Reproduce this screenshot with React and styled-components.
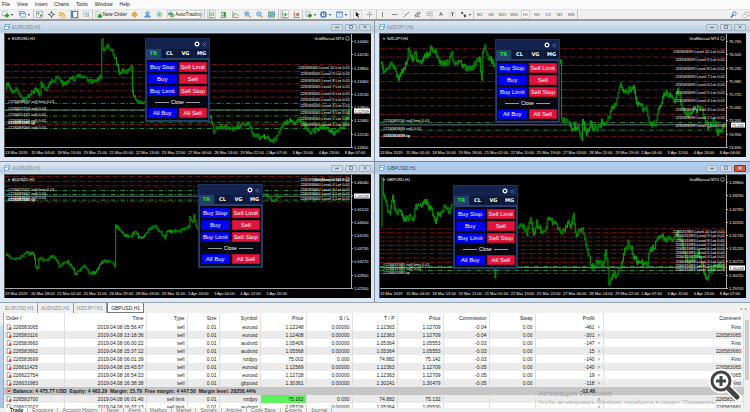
import React from 'react';
import styled, { createGlobalStyle, css } from 'styled-components';

const GlobalStyle = createGlobalStyle`
  * {
    box-sizing: border-box;
  }

  body {
    margin: 0;
    overflow: hidden;
    background: #f0f0f0;
    color: #222;
    font-family: 'Liberation Sans', Arial, sans-serif;
    font-size: 5px;
  }

  button {
    margin: 0;
    padding: 0;
    border: 0;
    background: none;
    color: inherit;
    font: inherit;
  }
`;

const Page = styled.main`
  display: flex;
  flex-direction: column;
`;

/* ---------- menu and toolbar ---------- */

const MenuBar = styled.nav`
  display: flex;
  gap: 7px;
  height: 9px;
  padding-left: 2px;
  background: #fbfbfb;
  line-height: 9px;
`;

const Toolbar = styled.div`
  display: flex;
  align-items: center;
  height: 12px;
  border-top: 1px solid #e4e4e4;
  border-bottom: 2px solid #9a9a9a;
`;

const Group = styled.div`
  display: flex;
  align-items: center;
  justify-content: space-around;
  flex: 0 0 ${({ $width }) => $width}px;
  height: 9px;
  border-right: 1px solid #c4c4c4;
`;

const Tool = styled.button`
  display: flex;
  align-items: center;
  justify-content: center;
  gap: 1px;
  min-width: 9px;
  height: 9px;
  line-height: 9px;
  white-space: nowrap;
  ${({ $period }) => $period && css`
    color: #555;
    font-size: 4px;
  `}
  ${({ $pressed }) => $pressed && css`
    background: #fafafa;
    outline: 1px solid #d2d2d2;
    outline-offset: -1px;
  `}
`;

const ToolbarEnd = styled.div`
  display: flex;
  gap: 3px;
  margin-left: auto;
`;

const Svg = styled.svg`
  display: block;
  flex: none;
  width: ${({ $size }) => $size || 8}px;
  height: ${({ $size }) => $size || 8}px;
`;

const icons = {
  newChart: (
    <>
      <rect x="1" y="2" width="11" height="9" fill="#fff" stroke="#7a8a9a" />
      <path d="M11 6v9M6 10.5h10" stroke="#16a016" strokeWidth="4" />
    </>
  ),
  profiles: (
    <>
      <rect x="1" y="1" width="11" height="8" fill="#bcd8f5" stroke="#5c8fc4" strokeWidth="1.5" />
      <rect x="4" y="6" width="11" height="8" fill="#e4f0fc" stroke="#5c8fc4" strokeWidth="1.5" />
    </>
  ),
  market: (
    <>
      <rect x="1" y="1" width="14" height="14" fill="#fff" stroke="#5b9bd8" strokeWidth="1.5" />
      <path d="M3 5l3-2 2 3-3 3z" fill="#20a030" />
      <path d="M8 9l4-2 2 3-3 4z" fill="#e0622a" />
    </>
  ),
  data: (
    <>
      <circle cx="8" cy="8" r="4" fill="#fff" stroke="#555" strokeWidth="2" />
      <path d="M8 0v5M8 11v5M0 8h5M11 8h5" stroke="#555" strokeWidth="2" />
    </>
  ),
  navigator: (
    <>
      <path d="M1 3h5l1 2h4v6H1z" fill="#f7d35a" stroke="#b98d17" />
      <path d="M6 8h4l1 1h4v6H6z" fill="#ffe28a" stroke="#b98d17" />
    </>
  ),
  terminal: (
    <>
      <rect x="1" y="1" width="14" height="14" fill="#fff" stroke="#3d7fc8" strokeWidth="2" />
      <path d="M3 1v14" stroke="#3d7fc8" strokeWidth="4" />
    </>
  ),
  tester: (
    <>
      <rect x="1" y="1" width="12" height="12" fill="#eef3f8" stroke="#9aa8b5" />
      <path d="M3 5h8M3 8h6" stroke="#6b93c0" />
      <circle cx="10" cy="9" r="3" fill="#d6e9fa" stroke="#777" />
      <path d="M12 11l4 4" stroke="#c99a2e" strokeWidth="2" />
    </>
  ),
  order: (
    <>
      <path d="M2 1h8l3 3v11H2z" fill="#fff" stroke="#888" />
      <path d="M4 5h6M4 8h4" stroke="#999" />
      <path d="M11 7v9M6 11.5h10" stroke="#16a016" strokeWidth="4" />
    </>
  ),
  editor: <path d="M8 1l7 7-7 7-7-7zM8 5l-3 4 6 1z" fill="#f0bc33" stroke="#a87912" />,
  account: (
    <>
      <circle cx="8" cy="5" r="4" fill="#7fb8f0" stroke="#3d7fc8" />
      <path d="M1 14c1-6 13-6 14 0z" fill="#5b9be0" stroke="#3d7fc8" />
    </>
  ),
  signal: (
    <>
      <circle cx="8" cy="8" r="6" fill="none" stroke="#9cb9cf" strokeWidth="2" />
      <circle cx="8" cy="8" r="3" fill="#4cae5e" />
    </>
  ),
  auto: (
    <>
      <path d="M1 7l7-5 7 5-7 3z" fill="#4c9ad8" stroke="#28689d" />
      <path d="M3 8h10l-2 5H5z" fill="#f0c13a" />
      <circle cx="12" cy="11" r="4" fill="#22aa36" />
      <path d="M11 9l3 2-3 2z" fill="#fff" />
    </>
  ),
  bars: <path d="M3 1v14h12M7 3v9M7 5H5M7 10h3M12 2v9M12 4h-2M12 9h3" stroke="#3c8b46" strokeWidth="1.5" fill="none" />,
  candles: (
    <>
      <path d="M1 15h14M5 1v13M11 2v12" stroke="#338a3d" strokeWidth="1.5" />
      <rect x="3" y="4" width="4" height="7" fill="#fff" stroke="#338a3d" />
      <rect x="9" y="4" width="4" height="8" fill="#22aa36" stroke="#338a3d" />
    </>
  ),
  line: <path d="M2 1v14h13M3 12l4-7 4 3 4 2" stroke="#3c8b46" strokeWidth="1.5" fill="none" />,
  zoomIn: (
    <>
      <circle cx="6.5" cy="6.5" r="5" fill="#d8edff" stroke="#4a90d2" strokeWidth="2" />
      <path d="M4 6.5h5M6.5 4v5" stroke="#2466a8" strokeWidth="1.5" />
      <path d="M10 10l5 5" stroke="#d0a02c" strokeWidth="3" />
    </>
  ),
  zoomOut: (
    <>
      <circle cx="6.5" cy="6.5" r="5" fill="#d8edff" stroke="#4a90d2" strokeWidth="2" />
      <path d="M4 6.5h5" stroke="#2466a8" strokeWidth="1.5" />
      <path d="M10 10l5 5" stroke="#d0a02c" strokeWidth="3" />
    </>
  ),
  tile: (
    <>
      <path d="M1 2h6v5H1zM9 9h6v5H9z" fill="#fff" stroke="#2f9f3e" strokeWidth="2" />
      <path d="M9 2h6v5H9zM1 9h6v5H1z" fill="#fff" stroke="#2d73c4" strokeWidth="2" />
    </>
  ),
  scroll: (
    <>
      <path d="M3 1v14h12M7 4v8" stroke="#555" strokeWidth="1.5" fill="none" />
      <path d="M9 4l6 4-6 4z" fill="#2faa3e" />
    </>
  ),
  shift: (
    <>
      <path d="M3 1v14h12M13 3v9" stroke="#555" strokeWidth="1.5" fill="none" />
      <path d="M11 4L5 8l6 4z" fill="#d2472d" />
    </>
  ),
  indicators: (
    <>
      <path d="M2 1h9v11H2z" fill="#fff" stroke="#888" />
      <path d="M4 9c2-8 3-5 5-5" stroke="#4a90d2" fill="none" />
      <path d="M11 6v9M6 10.5h10" stroke="#16a016" strokeWidth="4" />
    </>
  ),
  clock: (
    <>
      <circle cx="8" cy="8" r="6" fill="#fff" stroke="#2673c9" strokeWidth="3" />
      <path d="M8 4v5h3" stroke="#333" strokeWidth="1.5" fill="none" />
    </>
  ),
  template: (
    <>
      <rect x="1" y="2" width="14" height="12" fill="#fff" stroke="#5b9bd8" strokeWidth="2" />
      <path d="M1 4h14" stroke="#5b9bd8" strokeWidth="3" />
      <path d="M3 11l3-3 3 2 4-3" stroke="#d2472d" fill="none" />
    </>
  ),
  cursor: <path d="M4 1v12l3-3 2 5 3-1-3-5h4z" fill="#222" />,
  cross: <path d="M8 1v6M8 9v6M1 8h6M9 8h6" stroke="#777" strokeWidth="1.5" />,
  vline: <path d="M8 2v12" stroke="#777" strokeWidth="2" />,
  hline: <path d="M2 8h12" stroke="#777" strokeWidth="2" />,
  trend: <path d="M2 14L14 2" stroke="#777" strokeWidth="2" />,
  channel: <path d="M1 11L11 1M4 14L15 4M4 8v6M8 5v6M12 2v5M8 13h6" stroke="#555" strokeWidth="1.5" />,
  fibo: <path d="M1 2h14M1 6h14M1 10h14M10 14h5" stroke="#777" strokeWidth="1.5" strokeDasharray="2 1" />,
  label: (
    <>
      <rect x="2" y="2" width="12" height="12" fill="#fff" stroke="#888" strokeDasharray="2 1" />
      <path d="M5 5h6M8 5v7" stroke="#444" strokeWidth="2" />
    </>
  ),
  arrows: <path d="M1 5l4-4 3 5-3 1zM8 8l4 0 3 4-5 3z" fill="#444" />,
  search: (
    <>
      <circle cx="10" cy="6" r="4" fill="#fff" stroke="#2c6fc9" strokeWidth="2" />
      <path d="M7 9l-5 6" stroke="#2c6fc9" strokeWidth="3" />
    </>
  ),
  chat: (
    <>
      <ellipse cx="10" cy="6" rx="5.5" ry="4" fill="#eee" stroke="#999" />
      <ellipse cx="6" cy="10" rx="5" ry="3.5" fill="#fff" stroke="#999" />
    </>
  ),
  window: (
    <>
      <rect x="4" y="1" width="11" height="8" fill="#fff" stroke="#5b9bd8" strokeWidth="2" />
      <rect x="1" y="6" width="11" height="8" fill="#fff" stroke="#5b9bd8" strokeWidth="2" />
    </>
  ),
  gear: (
    <>
      <circle cx="8" cy="8" r="4.5" fill="none" stroke="#fff" strokeWidth="2.5" />
      <path d="M8 0v4M8 12v4M0 8h4M12 8h4M2.3 2.3l3 3M10.7 10.7l3 3M13.7 2.3l-3 3M5.3 10.7l-3 3" stroke="#fff" strokeWidth="2" />
    </>
  ),
  collapse: <path d="M8 2L2 8l6 6M14 2L8 8l6 6" fill="none" stroke="#a9b4d4" strokeWidth="1.5" />,
  smile: (
    <>
      <circle cx="8" cy="8" r="6.5" fill="none" stroke="#ccc" strokeWidth="1.5" />
      <path d="M5 5v2M11 5v2M4 9c2 4 6 4 8 0" fill="none" stroke="#ccc" strokeWidth="1.5" />
    </>
  ),
  sheet: (
    <>
      <path d="M3 1h6l4 4v10H3z" fill="#fff" stroke="#555" strokeWidth="1.5" />
      <circle cx="11" cy="12" r="3.5" fill="#e0452a" />
    </>
  ),
  balance: (
    <>
      <rect x="3" y="1" width="10" height="14" fill="#eee" stroke="#777" strokeWidth="1.5" />
      <circle cx="8" cy="8" r="3.5" fill="#d2372a" />
    </>
  ),
  caret: <path d="M3 5h10l-5 6z" fill="currentColor" />,
};

const Icon = ({ name, size }) => (
  <Svg $size={size} viewBox="0 0 16 16" aria-hidden="true">{icons[name]}</Svg>
);

const menu = ['File', 'View', 'Insert', 'Charts', 'Tools', 'Window', 'Help'];

const toolGroups = [
  { width: 34, tools: [{ icon: 'newChart', drop: true }, { icon: 'profiles', drop: true }] },
  {
    width: 59,
    tools: [
      { icon: 'market' },
      { icon: 'data' },
      { icon: 'navigator' },
      { icon: 'terminal', pressed: true },
      { icon: 'tester' },
    ],
  },
  {
    width: 112,
    tools: [
      { icon: 'order', text: 'New Order' },
      { icon: 'editor' },
      { icon: 'account' },
      { icon: 'signal' },
      { icon: 'auto', text: 'AutoTrading', pressed: true },
    ],
  },
  {
    width: 74,
    tools: [
      { icon: 'bars', pressed: true },
      { icon: 'candles' },
      { icon: 'line' },
      { icon: 'zoomIn' },
      { icon: 'zoomOut' },
      { icon: 'tile' },
    ],
  },
  { width: 24, tools: [{ icon: 'scroll', pressed: true }, { icon: 'shift' }] },
  {
    width: 48,
    tools: [
      { icon: 'indicators', drop: true },
      { icon: 'clock', drop: true },
      { icon: 'template', drop: true },
    ],
  },
  { width: 26, tools: [{ icon: 'cursor', pressed: true }, { icon: 'cross' }] },
  {
    width: 97,
    tools: [
      { icon: 'vline' },
      { icon: 'hline' },
      { icon: 'trend' },
      { icon: 'channel' },
      { icon: 'fibo' },
      { text: 'A' },
      { icon: 'label' },
      { icon: 'arrows', drop: true },
    ],
  },
  {
    width: 104,
    tools: ['M1', 'M5', 'M15', 'M30', 'H1', 'H4', 'D1', 'W1', 'MN'].map((text) => ({
      text,
      period: true,
      pressed: text === 'H1',
    })),
  },
];

/* ---------- chart windows ---------- */

const Desktop = styled.section`
  display: grid;
  grid-template-columns: 1fr 1fr;
  row-gap: 1px;
  background: #7d8790;
`;

const Window = styled.article`
  padding: 0 4px 4px;
  background: linear-gradient(#dce8f4, #b9cde0 10px, #dbe7f5 13px);
  ${({ $active }) => $active && css`
    background: linear-gradient(#b4cfec, #a9c6e4 10px, #cfe2f5 13px);
  `}
  ${({ $left }) => $left && css`
    padding-right: 3px;
    border-right: 1px solid #8a949e;
  `}
`;

const TitleBar = styled.header`
  display: flex;
  align-items: center;
  gap: 2px;
  height: 12px;
  color: ${({ $active }) => ($active ? '#38434f' : '#84888c')};
`;

const Caption = styled.h2`
  flex: 1;
  margin: 0;
  font-size: 5px;
  font-weight: 400;
`;

const Control = styled.button`
  display: flex;
  align-items: center;
  justify-content: center;
  width: 12px;
  height: 7px;
  border: 1px solid #a3b2c1;
  border-radius: 1px;
  background: #cddbe9;
  color: #7c8894;
  ${({ $close }) => $close && css`
    border-color: #8c2b1d;
    background: #d4573f;
    color: #fff;
  `}
`;

const Frame = styled.div`
  position: relative;
  display: grid;
  grid-template-columns: 1fr 19px;
  grid-template-rows: 114px 9px;
  border-top: 1px solid #555;
  border-left: 1px solid #555;
  background: #000;
  color: #f4f4f4;
  font-size: 4px;
  line-height: 5px;
  white-space: nowrap;
`;

const Plot = styled.div`
  position: relative;
  border-right: 1px solid #aaa;
  border-bottom: 1px solid #aaa;

  > svg {
    display: block;
    width: 100%;
    height: 113px;
  }
`;

const PriceAxis = styled.div`
  display: grid;
  grid-row: 1 / 3;
  grid-column: 2;
  grid-auto-rows: 1fr;
  align-items: center;
  padding: 1px 0 3px;
`;

const Tick = styled.span`
  display: flex;
  align-items: center;
  gap: 1px;

  &::before {
    width: 1px;
    height: 1px;
    background: #aaa;
    content: '';
  }
`;

const CurrentPrice = styled.output`
  position: absolute;
  right: 1px;
  padding: 0 1px;
  background: #fff;
  color: #111;
  transform: translateY(-50%);
`;

const TimeAxis = styled.div`
  display: grid;
  grid-template-columns: repeat(14, 1fr);
  grid-row: 2;
  grid-column: 1 / 3;
  padding-top: 2px;
`;

const ChartTitle = styled.div`
  position: absolute;
  top: 2px;
  left: 2px;
  display: flex;
  align-items: center;
  gap: 1px;
  color: #fff;
`;

const Advisor = styled.div`
  position: absolute;
  top: 2px;
  right: 1px;
  display: flex;
  gap: 1px;
`;

const PlotLabel = styled.span`
  position: absolute;
  transform: translateY(-50%);
  ${({ $side }) => ($side === 'left' ? 'left: 3px;' : 'right: 1px;')}
  ${({ $bold }) => $bold && css`
    color: #fff;
    font-weight: 700;
  `}
`;

/* ---------- trading panel ---------- */

const Panel = styled.aside`
  position: absolute;
  top: ${({ $top }) => $top}px;
  left: ${({ $left }) => $left}px;
  z-index: 1;
  width: 65px;
  border: 1px solid #1d3263;
  background: #142250;
  color: #fff;
`;

const PanelHead = styled.div`
  display: flex;
  align-items: center;
  justify-content: flex-end;
  gap: 2px;
  height: 10px;
  padding-right: 2px;
`;

const PanelTabs = styled.div`
  display: grid;
  grid-template-columns: repeat(4, 1fr);
  gap: 1px;
  height: 9px;
`;

const PanelTab = styled.button`
  background: ${({ $on }) => ($on ? '#24406f' : '#0e1838')};
  color: ${({ $on }) => ($on ? '#1ee61e' : '#fff')};
  font-family: 'DejaVu Sans', sans-serif;
  font-size: 5px;
  font-weight: 700;
  line-height: 9px;
`;

const PanelBody = styled.div`
  display: grid;
  grid-template-columns: 1fr 1fr;
  gap: 2px;
  padding: 2px 1px;
  border: 1px solid #24406f;
  border-top-width: 2px;
  background: #050810;
`;

const Trade = styled.button`
  height: 10px;
  border: 1px solid ${({ $sell }) => ($sell ? '#b30c2e' : '#0000c4')};
  background: ${({ $sell }) => ($sell ? '#e0143c' : '#0000fa')};
  font-size: 6px;
  line-height: 8px;
`;

const Divider = styled.div`
  display: flex;
  align-items: center;
  justify-content: center;
  gap: 2px;
  grid-column: 1 / 3;
  height: 8px;
  font-size: 5px;

  &::before,
  &::after {
    width: 14px;
    height: 1px;
    background: #999;
    content: '';
  }
`;

const trades = ['Buy Stop', 'Sell Limit', 'Buy', 'Sell', 'Buy Limit', 'Sell Stop', 'Close', 'All Buy', 'All Sell'];

const TradePanel = ({ top, left }) => (
  <Panel $top={top} $left={left}>
    <PanelHead>
      <Icon name="gear" size={6} />
      <Icon name="collapse" size={5} />
    </PanelHead>
    <PanelTabs>
      {['TR', 'CL', 'VG', 'MG'].map((name, i) => (
        <PanelTab key={name} $on={i === 0}>{name}</PanelTab>
      ))}
    </PanelTabs>
    <PanelBody>
      {trades.map((name) => (name === 'Close'
        ? <Divider key={name}>{name}</Divider>
        : <Trade key={name} $sell={name.includes('Sell')}>{name}</Trade>
      ))}
    </PanelBody>
  </Panel>
);

const lineStyles = {
  red: { stroke: '#7c1a1a', dash: '14 4 3 4' },
  green: { stroke: '#1f8a2c', dash: '14 6 3 6' },
  gray: { stroke: '#6d7880' },
};

// Fills the space between the turning points with small high-low bars
const buildBars = (points, noise) => {
  let seed = 7;
  const random = () => {
    seed = (seed * 16807) % 2147483647;
    return seed / 2147483647;
  };
  let d = '';
  let last = points[0][1];
  points.slice(1).forEach(([x, y], i) => {
    const [px, py] = points[i];
    const steps = Math.max(1, Math.round((x - px) / 3));
    for (let s = 1; s <= steps; s += 1) {
      const cx = px + ((x - px) * s) / steps;
      const cy = py + ((y - py) * s) / steps + (random() - 0.5) * noise;
      const high = Math.min(last, cy) - random() * noise * 0.3 - 1;
      const low = Math.max(last, cy) + random() * noise * 0.3 + 1;
      d += `M${cx.toFixed(1)} ${high.toFixed(1)}V${low.toFixed(1)}`;
      last = cy;
    }
  });
  return d;
};

const levels = (order, count, from, step) => Array.from({ length: count }, (_, i) => ({
  y: from + i * step,
  text: `${order} Level ${count - i} Lot 0.01`,
}));

const weekTimes = [
  '13 Mar 2019', '15 Mar 04:00', '18 Mar 13:00', '19 Mar 21:00', '21 Mar 05:00', '22 Mar 13:00', '25 Mar 22:00',
  '27 Mar 06:00', '28 Mar 14:00', '29 Mar 22:00', '2 Apr 07:00', '3 Apr 15:00', '4 Apr 23:00', '8 Apr 07:00',
];

// Plot units are thirds of a pixel, box is the visible [x, y, width, height]
const charts = [
  {
    symbol: 'EURUSD,H1',
    box: [12, 12, 1044, 342],
    panel: { top: 4, left: 140 },
    noise: 13,
    lines: {
      red: [105, 126, 144, 163, 184, 203, 286],
      green: [222, 243, 260, 279, 298],
      gray: [242],
    },
    orders: [
      { y: 216, text: '#226638692 sell limit 0.01' },
      { y: 235, text: '#226622754 sell 0.01' },
      { y: 253, text: '#226611425 sell 0.01' },
      { y: 272, text: '#226583116 sell 0.01' },
      { y: 277, text: '#226583065 tp', bold: true },
      { y: 292, text: '#226583065 sell 0.01' },
    ],
    levels: levels('226583065', 10, 112, 19.3),
    prices: ['1.14460', '1.14130', '1.13800', '1.13460', '1.13130', '1.12800', '1.12460', '1.12130', '1.11800'],
    current: { y: 243, text: '1.12709' },
    times: weekTimes,
    points: [
      [14, 178], [20, 165], [35, 185], [45, 175], [60, 205], [75, 210], [90, 190], [110, 180], [118, 200], [121, 165],
      [135, 180], [150, 160], [172, 140], [185, 165], [200, 155], [215, 148], [235, 140], [260, 150], [280, 155],
      [301, 140], [304, 32], [308, 65], [320, 45], [335, 60], [345, 90], [358, 130], [370, 120], [380, 125],
      [394, 105], [397, 190], [412, 222], [425, 215], [450, 218], [600, 240], [632, 262], [642, 308], [655, 290],
      [670, 298], [685, 290], [700, 300], [720, 290], [748, 280], [760, 315], [775, 325], [795, 325], [818, 338],
      [835, 322], [845, 290], [865, 275], [885, 280], [905, 270], [920, 295], [935, 310], [955, 300], [980, 290],
      [1000, 312], [1020, 300], [1035, 290], [1050, 240],
    ],
  },
  {
    symbol: 'NZDJPY,H1',
    box: [12, 12, 1044, 342],
    panel: { top: 5, left: 115 },
    noise: 18,
    lines: {
      red: [57, 82, 107, 132, 156, 181, 205, 229, 255, 323],
      green: [280, 303],
      gray: [287],
    },
    orders: [
      { y: 273, text: '#226583700 sell limit 0.01' },
      { y: 297, text: '#226583699 sell 0.01' },
      { y: 317, text: '#226583699 tp', bold: true },
    ],
    levels: levels('226583699', 10, 64, 24.8),
    prices: ['76.765', '76.505', '76.245', '75.985', '75.725', '75.465', '75.205', '74.950', '74.690'],
    current: { y: 285, text: '75.132' },
    times: [
      '13 Mar 2019', '15 Mar 01:00', '18 Mar 10:00', '19 Mar 18:00', '21 Mar 02:00', '22 Mar 10:00', '25 Mar 19:00',
      '27 Mar 03:00', '28 Mar 11:00', '29 Mar 19:00', '2 Apr 04:00', '3 Apr 12:00', '4 Apr 20:00', '8 Apr 04:00',
    ],
    points: [
      [14, 100], [22, 130], [30, 115], [45, 100], [60, 125], [68, 150], [80, 120], [92, 100], [97, 65], [110, 85],
      [118, 75], [125, 100], [140, 90], [155, 75], [165, 55], [180, 65], [187, 90], [195, 95], [210, 110],
      [220, 85], [228, 75], [235, 105], [255, 100], [275, 115], [290, 110], [305, 95], [312, 85], [318, 150],
      [322, 65], [328, 38], [335, 75], [345, 90], [355, 100], [540, 90], [557, 92], [560, 265], [570, 275],
      [580, 270], [590, 300], [605, 290], [613, 305], [619, 335], [623, 275], [635, 315], [647, 285], [660, 300],
      [670, 300], [680, 280], [690, 280], [700, 270], [710, 235], [720, 235], [727, 200], [737, 168], [750, 185],
      [760, 180], [777, 175], [783, 215], [795, 225], [805, 240], [817, 245], [827, 290], [845, 280], [852, 240],
      [865, 205], [873, 188], [885, 200], [900, 210], [910, 185], [920, 215], [930, 250], [945, 255], [955, 240],
      [970, 240], [980, 230], [990, 270], [1000, 290], [1020, 275], [1030, 308], [1042, 300], [1054, 285],
    ],
  },
  {
    symbol: 'AUDNZD,H1',
    box: [12, 45, 1044, 342],
    panel: { top: 9, left: 193 },
    noise: 9,
    lines: {
      red: [50, 65, 78, 126],
      green: [92, 104, 121],
      gray: [109],
    },
    orders: [
      { y: 86, text: '#226622022 sell limit 0.01' },
      { y: 100, text: '#226583662 sell 0.01' },
      { y: 113, text: '#226583660 sell 0.01' },
      { y: 117, text: '#226583660 tp', bold: true },
    ],
    levels: levels('226583660', 5, 58, 14),
    prices: ['1.06040', '1.05580', '1.05120', '1.04650', '1.04190', '1.03730', '1.03270', '1.02810', '1.02350'],
    current: { y: 109, text: '1.05535' },
    times: [
      '19 Mar 2019', '20 Mar 18:00', '22 Mar 02:00', '25 Mar 11:00', '26 Mar 19:00', '28 Mar 03:00', '29 Mar 11:00',
      '1 Apr 20:00', '3 Apr 04:00', '4 Apr 12:00', '5 Apr 20:00',
    ],
    points: [
      [14, 288], [30, 295], [55, 298], [75, 280], [98, 282], [104, 325], [110, 325], [114, 295], [130, 305],
      [150, 295], [163, 293], [175, 320], [190, 312], [200, 305], [215, 330], [228, 345], [250, 320], [265, 340],
      [285, 340], [300, 310], [320, 305], [335, 305], [344, 320], [346, 200], [355, 205], [370, 225], [390, 230],
      [405, 215], [415, 235], [430, 230], [450, 210], [465, 200], [480, 215], [495, 235], [500, 215], [520, 215],
      [540, 215], [555, 205], [568, 200], [570, 172], [578, 185], [582, 165], [588, 195], [594, 212], [620, 220],
      [780, 110], [790, 105], [805, 110], [820, 125], [830, 118], [842, 108],
    ],
  },
  {
    symbol: 'GBPUSD,H1',
    active: true,
    box: [12, 45, 1044, 342],
    panel: { top: 10, left: 73 },
    noise: 17,
    lines: {
      red: [208, 220, 233, 245, 258, 270, 283, 296, 310, 343],
      green: [322, 334],
      gray: [325],
    },
    orders: [
      { y: 315, text: '#226631985 sell limit 0.01' },
      { y: 327, text: '#226631983 sell 0.01' },
      { y: 338, text: '#226631983 tp' },
    ],
    levels: levels('226631983', 10, 215, 12.7),
    prices: ['1.33800', '1.33290', '1.32765', '1.32255', '1.31745', '1.31235', '1.30725', '1.30215', '1.29705'],
    current: { y: 325, text: '1.30468' },
    times: weekTimes,
    points: [
      [14, 200], [18, 65], [22, 110], [30, 120], [35, 150], [42, 155], [50, 110], [58, 160], [70, 150], [80, 175],
      [100, 175], [112, 175], [120, 145], [140, 130], [155, 130], [168, 150], [180, 190], [185, 165], [195, 160],
      [205, 145], [215, 155], [230, 140], [240, 150], [352, 300], [359, 350], [364, 300], [420, 200], [440, 200],
      [455, 225], [465, 180], [475, 220], [485, 190], [500, 215], [510, 215], [520, 168], [530, 185], [545, 195],
      [555, 220], [575, 200], [580, 180], [587, 200], [595, 160], [601, 225], [610, 215], [623, 210], [630, 240],
      [640, 285], [650, 325], [670, 310], [685, 320], [693, 265], [703, 370], [713, 350], [730, 345], [740, 310],
      [750, 270], [760, 250], [770, 265], [777, 300], [795, 310], [820, 320], [823, 280], [840, 260], [855, 225],
      [873, 240], [890, 240], [910, 225], [920, 235], [935, 300], [950, 305], [965, 295], [973, 280], [985, 320],
      [997, 360], [1005, 340], [1020, 320], [1030, 315], [1050, 325],
    ],
  },
];

const ChartWindow = ({ chart, left }) => {
  const [x, y, width, height] = chart.box;
  const place = (value) => ({ top: `${((value - y) / height) * 100}%` });

  return (
    <Window $active={chart.active} $left={left}>
      <TitleBar $active={chart.active}>
        <Icon name="window" size={6} />
        <Caption>{chart.symbol}</Caption>
        <Control aria-label="Minimize">
          <Svg $size={4} viewBox="0 0 8 8"><path d="M0 5h8" stroke="currentColor" strokeWidth="3" /></Svg>
        </Control>
        <Control aria-label="Maximize">
          <Svg $size={4} viewBox="0 0 8 8"><path d="M1 1h6v6H1z" fill="none" stroke="currentColor" strokeWidth="2" /></Svg>
        </Control>
        <Control aria-label="Close" $close={chart.active}>
          <Svg $size={4} viewBox="0 0 8 8"><path d="M1 1l6 6M7 1L1 7" stroke="currentColor" strokeWidth="2" /></Svg>
        </Control>
      </TitleBar>
      <Frame>
        <Plot>
          <svg viewBox={`${x} ${y} ${width} ${height}`} preserveAspectRatio="none" aria-hidden="true">
            {Object.entries(chart.lines).map(([kind, rows]) => rows.map((row) => (
              <path
                key={`${kind}${row}`}
                d={`M${x} ${row}h${width}`}
                stroke={lineStyles[kind].stroke}
                strokeDasharray={lineStyles[kind].dash}
                strokeWidth="3"
              />
            )))}
            <path d={buildBars(chart.points, chart.noise)} stroke="#00a400" strokeWidth="3" />
          </svg>
          <ChartTitle>
            <Icon name="caret" size={4} />
            {chart.symbol}
          </ChartTitle>
          <Advisor>
            GridManual MT4
            <Icon name="smile" size={5} />
          </Advisor>
          {chart.orders.map((order) => (
            <PlotLabel key={order.y} $side="left" $bold={order.bold} style={place(order.y)}>{order.text}</PlotLabel>
          ))}
          {chart.levels.map((level) => (
            <PlotLabel key={level.y} $side="right" style={place(level.y)}>{level.text}</PlotLabel>
          ))}
          <TradePanel {...chart.panel} />
        </Plot>
        <PriceAxis>
          {chart.prices.map((price) => <Tick key={price}>{price}</Tick>)}
        </PriceAxis>
        <CurrentPrice style={{ top: `${((chart.current.y - y) / 369) * 100}%` }}>{chart.current.text}</CurrentPrice>
        <TimeAxis>
          {chart.times.map((time) => <span key={time}>{time}</span>)}
        </TimeAxis>
      </Frame>
    </Window>
  );
};

/* ---------- terminal ---------- */

const ChartTabs = styled.div`
  display: flex;
  align-items: center;
  height: 11px;
  padding-left: 2px;
  border-top: 1px solid #9aa3ab;
`;

const ChartTab = styled.button`
  height: 10px;
  padding: 0 3px;
  border-right: 1px solid #999;
  color: #888;
  line-height: 10px;
  ${({ $on }) => $on && css`
    border: 1px solid #777;
    border-top: 0;
    background: #fff;
    color: #222;
  `}
`;

const TabArrows = styled.span`
  margin-left: auto;
  padding-right: 3px;
  color: #888;
  font-size: 4px;
`;

const Terminal = styled.section`
  position: relative;
  display: flex;
  height: 95px;
  overflow: hidden;
`;

const Side = styled.div`
  flex: 0 0 4px;
  border-right: 1px solid #aaa;
  background: linear-gradient(#f0f0f0 10px, #c9dcef 14px, #a8c4e4);
`;

const Orders = styled.table`
  flex: 1;
  width: 100%;
  height: max-content;
  border-collapse: collapse;
  table-layout: fixed;
  background: #fff;
  line-height: 8px;
  white-space: nowrap;
`;

const Head = styled.th`
  width: ${({ $width }) => ($width ? `${$width}px` : 'auto')};
  height: 10px;
  padding: 0 2px;
  border-right: 1px solid #e2e2e2;
  font-weight: 400;
  text-align: ${({ $first }) => ($first ? 'left' : 'right')};
  ${({ $profit }) => $profit && css`
    padding-right: 8px;
  `}
`;

const Row = styled.tr`
  background: ${({ $shade }) => ($shade ? '#ebebeb' : '#fff')};
`;

const Cell = styled.td`
  height: 8px;
  padding: 0 2px;
  border-right: 1px solid #dedede;
  background: ${({ $hit }) => ($hit ? '#5ff25f' : 'none')};
  text-align: right;
`;

const Ticket = styled.span`
  display: flex;
  align-items: center;
  gap: 1px;
`;

const Profit = styled.span`
  display: flex;
  justify-content: flex-end;
  gap: 3px;
`;

const Cross = styled.button`
  width: 3px;
  color: #888;
`;

const BalanceRow = styled.tr`
  background: #c6c6c6;
  font-weight: 700;

  td {
    height: 8px;
    padding: 0 2px;
  }

  td + td {
    padding-right: 8px;
    text-align: right;
  }
`;

const Scrollbar = styled.div`
  flex: 0 0 6px;
  padding: 7px 1px;
  background: #f0f0f0;

  &::before {
    display: block;
    height: 60px;
    background: #cdcdcd;
    content: '';
  }
`;

const Watermark = styled.div`
  position: absolute;
  top: 77px;
  left: 538px;
  color: rgba(130, 130, 130, 0.6);
  font-size: 6px;
  line-height: 8px;
  white-space: nowrap;
`;

const WatermarkTitle = styled.div`
  font-size: 8px;
`;

const Magnifier = styled.button`
  position: absolute;
  right: 8px;
  bottom: 6px;
`;

const BottomTabs = styled.div`
  display: flex;
  padding-left: 6px;
  color: #777;
`;

const BottomTab = styled.button`
  padding: 0 4px;
  border-right: 1px solid #bbb;
  line-height: 4px;
  ${({ $on }) => $on && css`
    background: #fff;
    color: #222;
    font-weight: 700;
  `}
`;

const columns = [
  ['Order  /', 60], ['Time', 82], ['Type', 41], ['Size', 32], ['Symbol', 41], ['Price', 46], ['S / L', 46],
  ['T / P', 45], ['Price', 46], ['Commission', 46], ['Swap', 46], ['Profit', 68], ['Comment'],
];

const orders = [
  ['226583065', '2019.04.08 05:56:47', 'sell', '0.01', 'eurusd', '1.12248', '0.00000', '1.12363', '1.12709', '-0.04', '0.00', '-461', 'First'],
  ['226583116', '2019.04.08 13:18:36', 'sell', '0.01', 'eurusd', '1.12408', '0.00000', '1.12363', '1.12709', '-0.04', '0.00', '-301', '226583065'],
  ['226583660', '2019.04.08 06:00:22', 'sell', '0.01', 'audnzd', '1.05406', '0.00000', '1.05364', '1.05553', '-0.03', '0.00', '-147', 'First'],
  ['226583662', '2019.04.08 15:37:12', 'sell', '0.01', 'audnzd', '1.05568', '0.00000', '1.05364', '1.05553', '-0.03', '0.00', '15', '226583660'],
  ['226583699', '2019.04.08 06:01:39', 'sell', '0.01', 'nzdjpy', '75.002', '0.000', '74.882', '75.142', '-0.03', '0.00', '-140', 'First'],
  ['226611425', '2019.04.08 15:43:57', 'sell', '0.01', 'eurusd', '1.12569', '0.00000', '1.12363', '1.12709', '-0.05', '0.00', '-140', '226583065'],
  ['226622754', '2019.04.08 16:54:23', 'sell', '0.01', 'eurusd', '1.12728', '0.00000', '1.12363', '1.12709', '-0.05', '0.00', '19', '226583065'],
  ['226631983', '2019.04.08 16:38:38', 'sell', '0.01', 'gbpusd', '1.30361', '0.00000', '1.30241', '1.30479', '-0.05', '0.00', '-118', 'First'],
];

const pending = [
  ['226583700', '2019.04.08 06:01:40', 'sell limit', '0.01', 'nzdjpy', '75.162', '0.000', '74.882', '75.132', '', '', '', '226583699'],
  ['226622022', '2019.04.08 16:37:13', 'sell limit', '0.01', 'audnzd', '1.05726', '0.00000', '1.05364', '1.05530', '', '', '', '226583660'],
];

const bottomTabs = [
  'Trade', 'Exposure', 'Account History', 'News', 'Alerts', 'Mailbox', 'Market', 'Signals', 'Articles', 'Code Base',
  'Experts', 'Journal',
];

const OrderRow = ({ cells, shade, hit }) => (
  <Row $shade={shade}>
    {cells.map((value, i) => (
      <Cell key={columns[i][0] + i} $hit={hit && i === 5}>
        {i === 0 && <Ticket><Icon name="sheet" size={6} />{value}</Ticket>}
        {i === 11 && <Profit>{value}<Cross aria-label="Close order">×</Cross></Profit>}
        {i !== 0 && i !== 11 && value}
      </Cell>
    ))}
  </Row>
);

const App = () => (
  <Page>
    <GlobalStyle />
    <MenuBar>
      {menu.map((name) => <button key={name}>{name}</button>)}
    </MenuBar>
    <Toolbar>
      {toolGroups.map((group, i) => (
        <Group key={i} $width={group.width}>
          {group.tools.map((tool) => (
            <Tool key={tool.icon || tool.text} $pressed={tool.pressed} $period={tool.period} aria-label={tool.text || tool.icon}>
              {tool.icon && <Icon name={tool.icon} size={7} />}
              {tool.text}
              {tool.drop && <Icon name="caret" size={4} />}
            </Tool>
          ))}
        </Group>
      ))}
      <ToolbarEnd>
        <Tool aria-label="Search"><Icon name="search" size={7} /></Tool>
        <Tool aria-label="Chat"><Icon name="chat" /></Tool>
      </ToolbarEnd>
    </Toolbar>
    <Desktop>
      {charts.map((chart, i) => <ChartWindow key={chart.symbol} chart={chart} left={i % 2 === 0} />)}
    </Desktop>
    <ChartTabs>
      {['EURUSD,H1', 'AUDNZD,H1', 'NZDJPY,H1', 'GBPUSD,H1'].map((name) => (
        <ChartTab key={name} $on={name === 'GBPUSD,H1'}>{name}</ChartTab>
      ))}
      <TabArrows>◂ &nbsp; ▸</TabArrows>
    </ChartTabs>
    <Terminal>
      <Side />
      <Orders>
        <thead>
          <tr>
            {columns.map(([name, width], i) => (
              <Head key={name + i} $width={width} $first={i === 0} $profit={name === 'Profit'}>{name}</Head>
            ))}
          </tr>
        </thead>
        <tbody>
          {orders.map((cells, i) => <OrderRow key={cells[0]} cells={cells} shade={i % 2 === 1} />)}
          <BalanceRow>
            <td colSpan={11}>
              <Ticket>
                <Icon name="balance" size={6} />
                Balance: 4 475.77 USD&nbsp; Equity: 4 463.29&nbsp; Margin: 15.79&nbsp; Free margin: 4 447.50&nbsp; Margin level: 28258.44%
              </Ticket>
            </td>
            <td>-12.48</td>
            <td />
          </BalanceRow>
          {pending.map((cells, i) => <OrderRow key={cells[0]} cells={cells} shade={i === 0} hit={i === 0} />)}
        </tbody>
      </Orders>
      <Scrollbar />
      <Watermark>
        <WatermarkTitle>Активация Windows</WatermarkTitle>
        Чтобы активировать Windows, перейдите в раздел &quot;Параметры&quot;.
      </Watermark>
      <Magnifier aria-label="Enlarge">
        <Svg $size={34} viewBox="0 0 34 34">
          <path d="M20 20l10 10" stroke="#fff" strokeWidth="8" strokeLinecap="round" />
          <circle cx="13" cy="13" r="11" fill="#fff" stroke="#fff" strokeWidth="3" />
          <circle cx="13" cy="13" r="9" fill="#fff" stroke="#444" strokeWidth="3" />
          <path d="M21 21l8 8" stroke="#444" strokeWidth="5" strokeLinecap="round" />
          <path d="M8 13h10M13 8v10" stroke="#444" strokeWidth="3" />
        </Svg>
      </Magnifier>
    </Terminal>
    <BottomTabs>
      {bottomTabs.map((name) => <BottomTab key={name} $on={name === 'Trade'}>{name}</BottomTab>)}
    </BottomTabs>
  </Page>
);

export default App;
